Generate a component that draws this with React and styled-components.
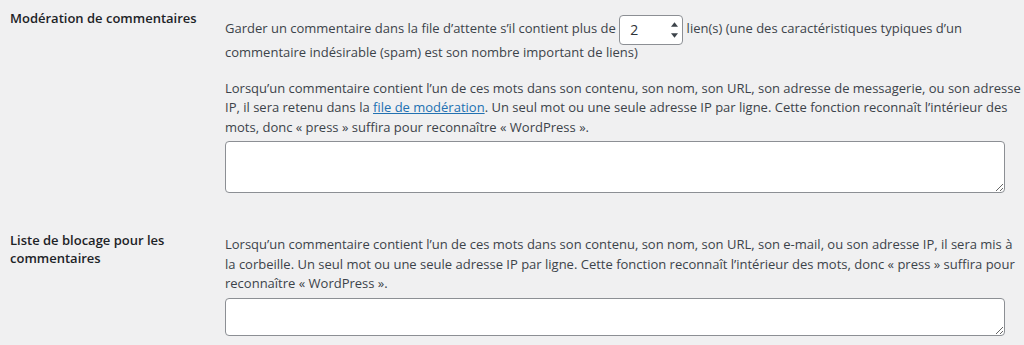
import React from 'react'
import styled, {createGlobalStyle} from 'styled-components'

const GlobalStyle = createGlobalStyle`
    html, body {
        margin: 0;
        padding: 0;
        background: #f0f0f1;
    }
    body {
        font-family: "Open Sans", "Noto Sans", "Liberation Sans", sans-serif;
        font-size: 13px;
        color: #3c434a;
    }
`;

export default function App () {
    return (
        <Page>
            <GlobalStyle/>
            <Row>
                <Label top={9}>Modération de commentaires</Label>
                <Field top={17}>
                    <Inline>
                        Garder un commentaire dans la file d’attente s’il contient plus de{' '}
                        <NumberBox>
                            <NumberValue>2</NumberValue>
                            <Stepper>
                                <Arrow viewBox="0 0 8 5"><path d="M0 5 L4 0 L8 5 Z"/></Arrow>
                                <Arrow viewBox="0 0 8 5"><path d="M0 0 L4 5 L8 0 Z"/></Arrow>
                            </Stepper>
                        </NumberBox>{' '}
                        lien(s) (une des caractéristiques typiques d’un<br/>
                        commentaire indésirable (spam) est son nombre important de liens)
                    </Inline>
                    <Description gap={16}>
                        Lorsqu’un commentaire contient l’un de ces mots dans son contenu, son nom, son URL, son adresse de messagerie, ou son adresse<br/>
                        IP, il sera retenu dans la <Link href="#">file de modération</Link>. Un seul mot ou une seule adresse IP par ligne. Cette fonction reconnaît l’intérieur des<br/>
                        mots, donc « press » suffira pour reconnaître « WordPress ».
                    </Description>
                    <TextBox rows={3} h={52}/>
                </Field>
            </Row>
            <Row top={38}>
                <Label top={0}>Liste de blocage pour les<br/>commentaires</Label>
                <Field top={4}>
                    <Description gap={0}>
                        Lorsqu’un commentaire contient l’un de ces mots dans son contenu, son nom, son URL, son e-mail, ou son adresse IP, il sera mis à<br/>
                        la corbeille. Un seul mot ou une seule adresse IP par ligne. Cette fonction reconnaît l’intérieur des mots, donc « press » suffira pour<br/>
                        reconnaître « WordPress ».
                    </Description>
                    <TextBox rows={2} h={38}/>
                </Field>
            </Row>
        </Page>
    )
}

const Page = styled.div`
    padding-left: 10px;
    width: 1024px;
    height: 345px;
    box-sizing: border-box;
    overflow: hidden;
`;

const Row = styled.div`
    display: grid;
    grid-template-columns: 215px 780px;
    margin-top: ${props => props.top || 0}px;
`;

const Label = styled.div`
    padding-top: ${props => props.top}px;
    font-size: 13px;
    font-weight: 600;
    line-height: 18px;
    color: #1d2327;
`;

const Field = styled.div`
    display: flex;
    flex-direction: column;
    padding-top: ${props => props.top}px;
`;

const Inline = styled.div`
    line-height: 22px;
    white-space: nowrap;
`;

const NumberBox = styled.span`
    display: inline-flex;
    align-items: center;
    vertical-align: middle;
    box-sizing: border-box;
    width: 64px;
    height: 30px;
    margin: -4px 0;
    padding: 0 4px 0 10px;
    background: #fff;
    border: 1px solid #8c8f94;
    border-radius: 4px;
    color: #2c3338;
    font-size: 14px;
`;

const NumberValue = styled.span`
    flex: 1;
    line-height: 28px;
`;

const Stepper = styled.span`
    display: flex;
    flex-direction: column;
    gap: 6px;
`;

const Arrow = styled.svg`
    width: 7px;
    height: 5px;
    fill: #3c434a;
`;

const Description = styled.div`
    margin-top: ${props => props.gap}px;
    line-height: 19.5px;
    white-space: nowrap;
`;

const Link = styled.a`
    color: #2271b1;
    text-decoration: underline;
`;

const TextBox = styled.textarea`
    display: block;
    box-sizing: border-box;
    width: 780px;
    height: ${props => props.h}px;
    margin-top: 4px;
    background: #fff;
    border: 1px solid #8c8f94;
    border-radius: 4px;
    font-family: inherit;
    font-size: 14px;
    resize: vertical;
`;
